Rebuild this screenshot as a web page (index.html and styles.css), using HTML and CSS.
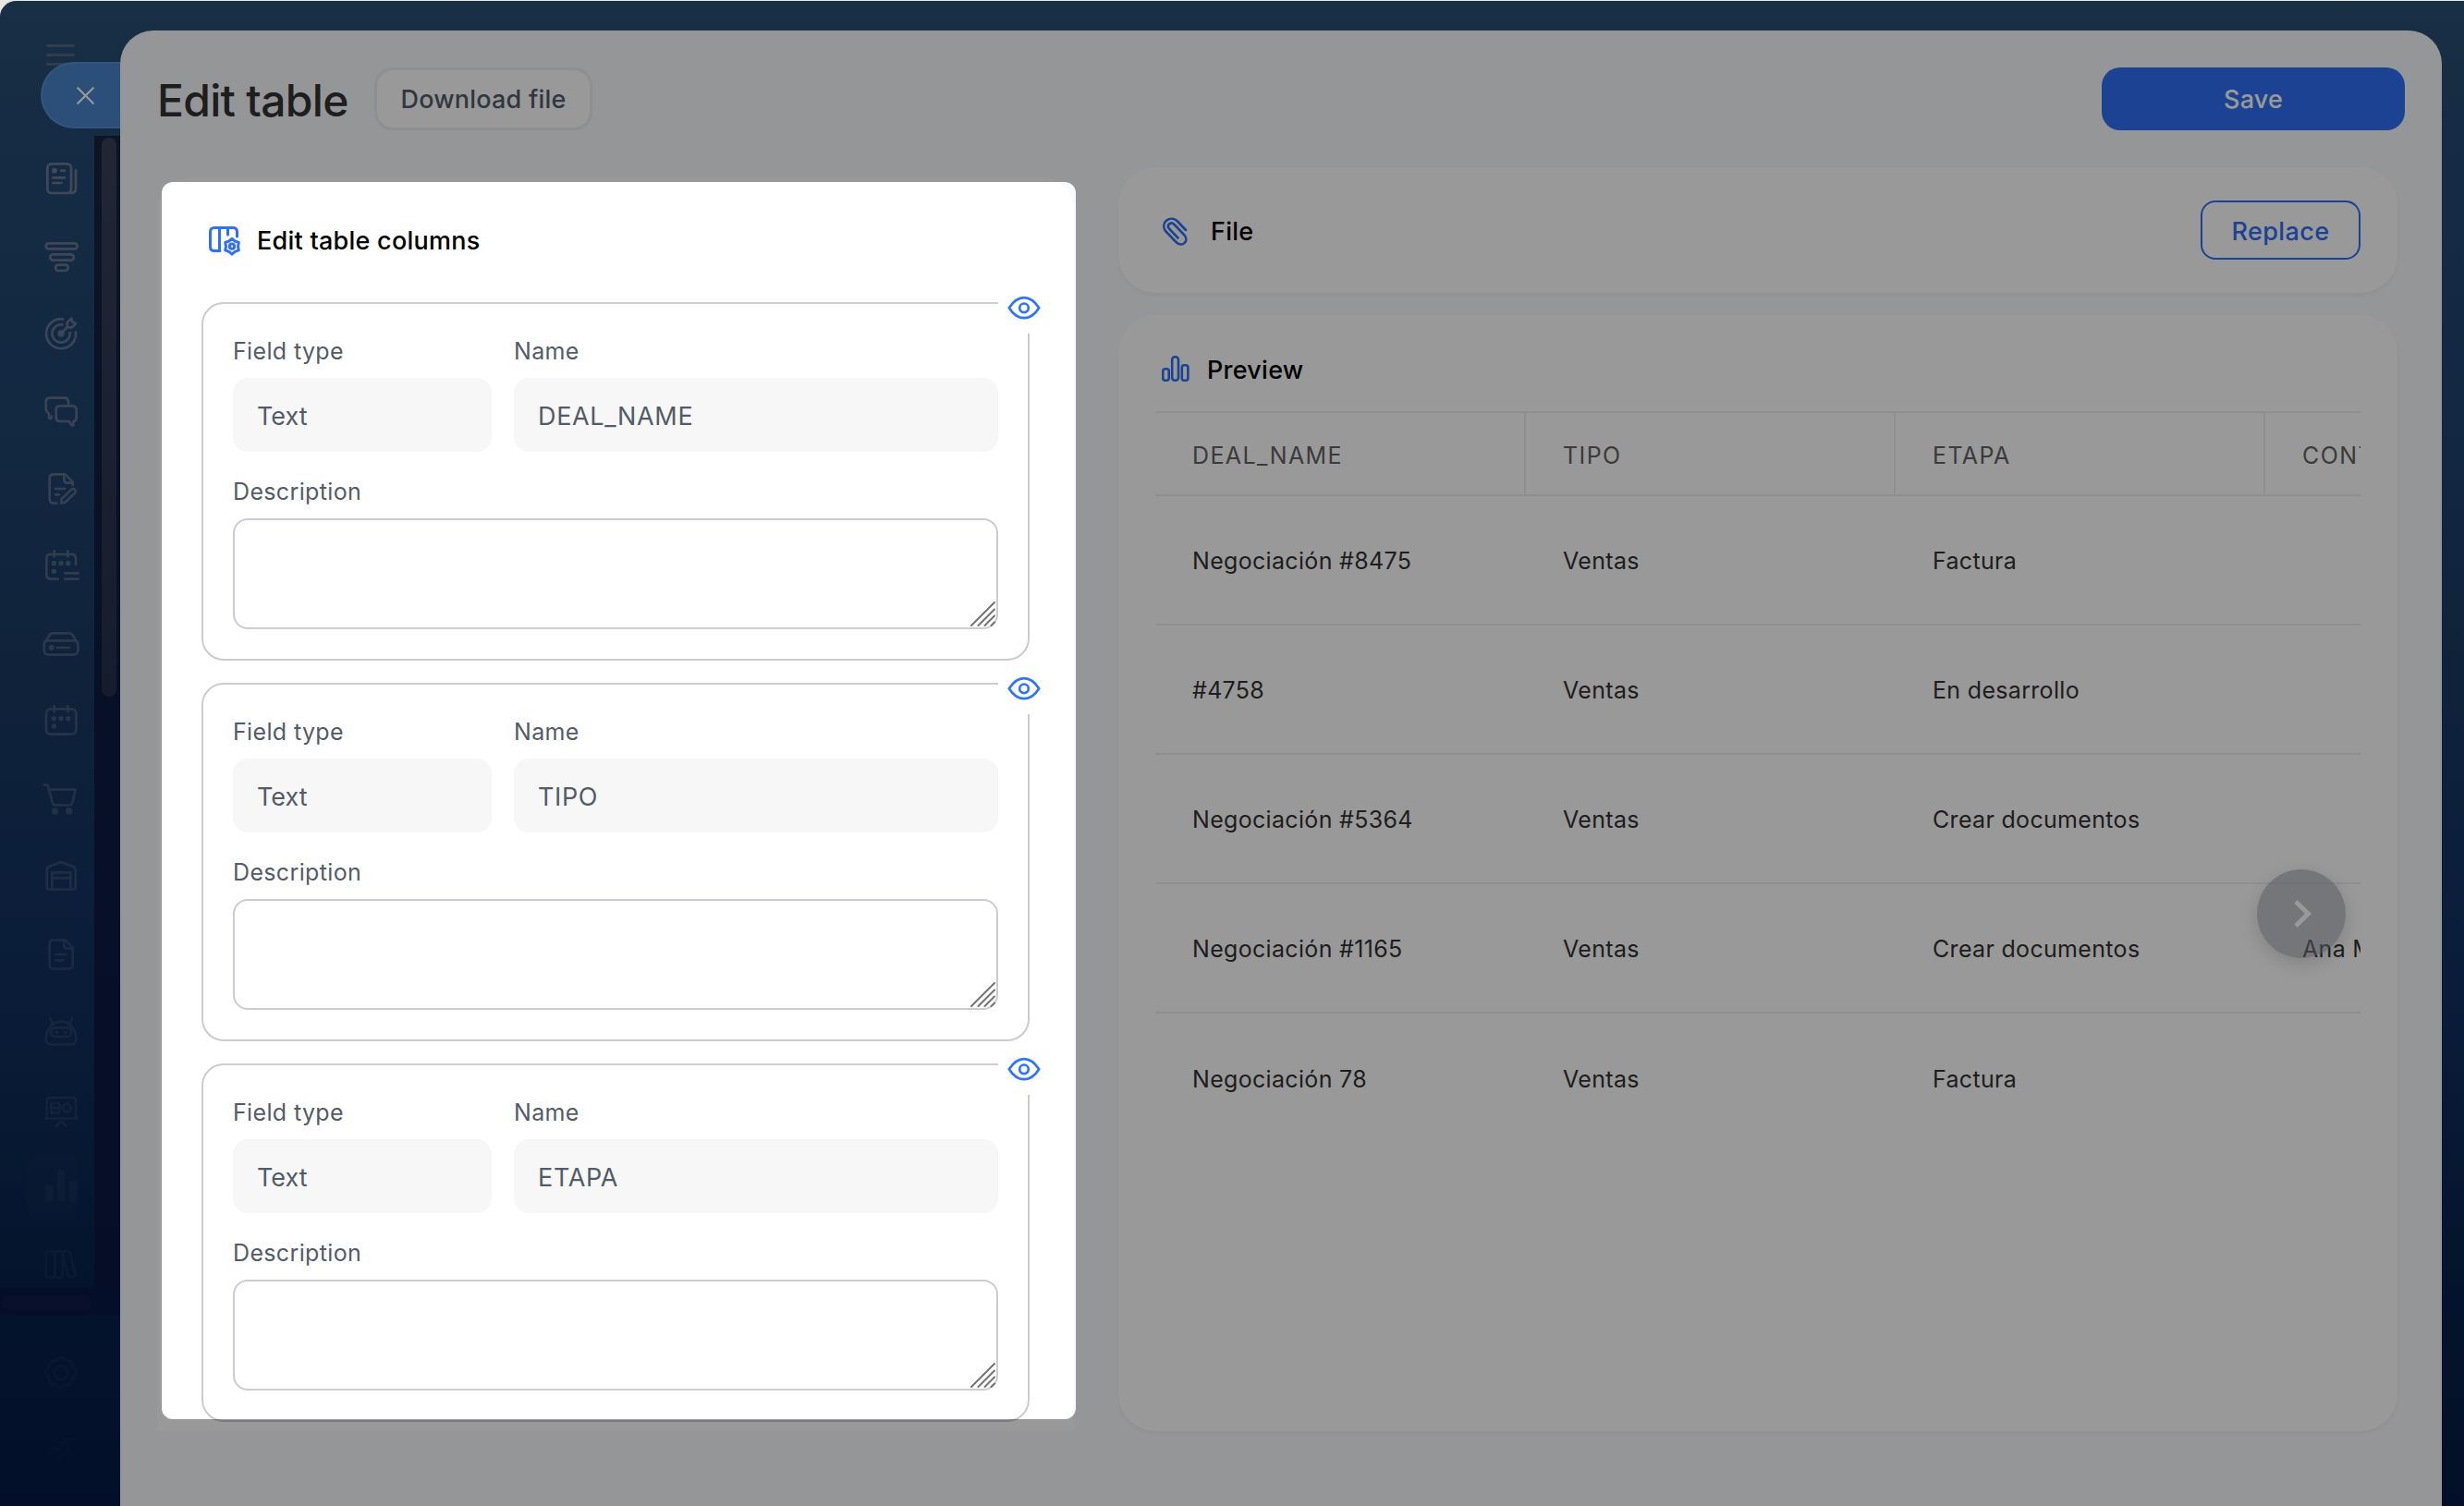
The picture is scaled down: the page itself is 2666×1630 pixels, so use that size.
FILE: index.html
```html
<!DOCTYPE html>
<html lang="en">
<head>
	<meta charset="UTF-8">
	<meta name="viewport" content="width=device-width, initial-scale=1.0">
	<title>Edit table</title>
	<link rel="stylesheet" href="styles.css">
</head>
<body>
	<!-- shared icons -->
	<svg class="defs" width="0" height="0">
		<symbol id="eye" viewBox="0 0 56 56">
			<path d="M11.8 28.3 C14 25 19 17.2 28 17.2 S42 25 44.2 28.3 C42 31.8 37 39.2 28 39.2 S14 31.8 11.8 28.3Z"/>
			<circle cx="28" cy="28.3" r="4.8"/>
		</symbol>
		<symbol id="grip" viewBox="0 0 28 28">
			<path d="M1 27 L26 2 M8.500 27 L26 9.500 M15.500 27 L26 16.500 M22.500 27 L26 23.500"/>
		</symbol>
	</svg>

	<div class="app">
		<aside class="sidebar">
			<div class="burger"><span></span><span></span><span></span></div>
			<div class="nav-scroll">
				<nav class="nav">
					<a class="nav-item"><svg viewBox="0 0 120 120"><rect x="16" y="13" width="77" height="95" rx="13"/><path d="M108 34 V94 Q108 108 93 108"/><path d="M60 35 H72 M34 58 H72 M34 75 H62"/><circle class="fill" cx="39" cy="35" r="9"/></svg></a>
					<a class="nav-item"><svg viewBox="0 0 120 120"><rect x="11" y="19" width="102" height="18" rx="9"/><rect x="25" y="55" width="76" height="19" rx="9"/><rect x="42" y="89" width="41" height="19" rx="9"/></svg></a>
					<a class="nav-item"><svg viewBox="0 0 120 120"><path d="M66 13 A48 48 0 1 0 108 56"/><path d="M64 31 A29 29 0 1 0 89 57 M60 60 L82 38"/><path d="M80 40 V24 L94 11 L97 23 L108 27 L96 40Z"/><circle class="fill" cx="60" cy="60" r="11"/></svg></a>
					<a class="nav-item"><svg viewBox="0 0 120 120"><path d="M84 36 V30 Q84 17 71 17 H24 Q11 17 11 30 V52 Q11 62 21 68 V82 Q29 88 30 77"/><path d="M57 43 H97 Q110 43 110 56 V80 Q110 91 100 94 V106 Q96 110 86 93 H57 Q44 93 44 80 V56 Q44 43 57 43Z"/></svg></a>
					<a class="nav-item"><svg viewBox="0 0 120 120"><path d="M46 107 H36 Q23 107 23 94 V26 Q23 13 36 13 H74 L98 38 V48"/><path d="M70 13 V30 Q70 41 80 41 H96 M42 60 H72 M42 79 H54"/><path d="M61 107 V94 L93 63 Q100 57 105 63 Q111 69 104 75 L73 104Z"/></svg></a>
					<a class="nav-item"><svg viewBox="0 0 120 120"><path d="M50 101 H26 Q13 101 13 88 V34 Q13 21 26 21 H94 Q108 21 108 34 V54 M38 10 V28 M82 10 V28 M73 82 H116 M73 101 H116"/><g class="fill"><circle cx="37" cy="50" r="8"/><circle cx="60" cy="50" r="8"/><circle cx="83" cy="50" r="8"/><circle cx="37" cy="76" r="8"/></g></svg></a>
					<a class="nav-item"><svg viewBox="0 0 120 120"><rect x="5" y="49" width="110" height="46" rx="14"/><path d="M8 54 L24 30 Q27 25 33 25 H87 Q93 25 97 30 L112 54 M48 72 H87"/><circle class="fill" cx="29" cy="72" r="9"/></svg></a>
					<a class="nav-item"><svg viewBox="0 0 120 120"><rect x="12" y="19" width="97" height="82" rx="14"/><path d="M38 10 V28 M82 10 V28"/><g class="fill"><circle cx="37" cy="50" r="8"/><circle cx="60" cy="50" r="8"/><circle cx="83" cy="50" r="8"/><circle cx="37" cy="75" r="8"/></g></svg></a>
					<a class="nav-item"><svg viewBox="0 0 120 120"><path d="M6 14 H17 L32 71 Q34 79 42 79 H88 Q95 79 97 72 L107 29 H22"/><g class="fill"><circle cx="40" cy="99" r="11"/><circle cx="86" cy="99" r="11"/></g></svg></a>
					<a class="nav-item"><svg viewBox="0 0 120 120"><path d="M14 93 V38 Q14 30 21 27 L54 14 Q60 11 66 14 L99 27 Q107 30 107 38 V93 Q107 101 99 101 H22 Q14 101 14 93Z"/><path d="M31 101 V46 H91 V101 M31 64 H91"/></svg></a>
					<a class="nav-item"><svg viewBox="0 0 120 120"><path d="M36 13 H74 L98 38 V94 Q98 107 85 107 H36 Q23 107 23 94 V26 Q23 13 36 13Z"/><path d="M70 13 V30 Q70 41 80 41 H96 M42 60 H76 M42 79 H68"/></svg></a>
					<a class="nav-item"><svg viewBox="0 0 120 120"><path d="M60 26 C30 26 11 54 11 85 Q11 100 28 100 H92 Q109 100 109 85 C109 54 90 26 60 26Z M24 15 L33 32 M97 15 L88 32"/><rect x="27" y="46" width="66" height="29" rx="14"/><g class="fill"><circle cx="46" cy="61" r="5"/><circle cx="74" cy="61" r="5"/></g></svg></a>
					<a class="nav-item"><svg viewBox="0 0 120 120"><path d="M14 89 V31 Q14 21 24 21 H98 Q108 21 108 31 V89 M8 89 H112 M44 113 L60 98 L76 113"/><rect x="28" y="39" width="27" height="32" rx="4"/><path d="M28 55 H55"/><circle cx="79" cy="54" r="13"/></svg></a>
					<a class="nav-item active"><svg viewBox="0 0 120 120"><g class="fill"><rect x="9" y="53" width="26" height="52" rx="8"/><rect x="48" y="5" width="25" height="100" rx="8"/><rect x="86" y="40" width="25" height="65" rx="8"/></g></svg></a>
					<a class="nav-item"><svg viewBox="0 0 120 120"><rect x="11" y="16" width="29" height="85" rx="9"/><rect x="40" y="16" width="26" height="85" rx="9"/><path d="M69 22 Q68 15 75 15 H82 Q87 15 89 20 L106 88 Q107 96 100 98 L92 100 Q86 101 84 95 L66 38"/></svg></a>
				</nav>
				<div class="track"><span class="thumb"></span></div>
			</div>
			<div class="track-x"><span class="thumb-x"></span></div>
			<div class="nav-bottom">
				<a class="nav-item"><svg viewBox="0 0 120 120"><circle cx="60" cy="62" r="22"/><path d="M50 20 Q60 4 70 20 L80 24 Q97 20 98 38 L102 50 Q120 62 102 74 L98 84 Q97 102 80 100 L70 104 Q60 120 50 104 L40 100 Q23 104 22 86 L18 74 Q0 62 18 50 L22 40 Q23 22 40 24Z"/></svg></a>
				<a class="nav-item rocket"><svg viewBox="0 0 120 120"><path d="M96 24 Q66 24 50 56 L66 72 Q96 54 96 24Z M50 56 H36 L28 68 L42 70 M66 72 V86 L54 94 L52 80"/><circle cx="76" cy="44" r="6"/></svg></a>
			</div>
			<button class="close-tab"><svg viewBox="0 0 24 24"><path d="M2.500 2.500 L21.500 21.500 M21.500 2.500 L2.500 21.500"/></svg></button>
		</aside>

		<main class="panel">
			<header class="panel-header">
				<h1>Edit table</h1>
				<button class="btn btn-light">Download file</button>
				<button class="btn btn-primary">Save</button>
			</header>

			<div class="content">
				<section class="columns">
					<h2 class="section-title">
						<svg class="icon-columns" viewBox="0 0 48 48"><path d="M20 35.500 H14 Q9.500 35.500 9.500 31 V15 Q9.500 10.500 14 10.500 H34 Q38.500 10.500 38.500 15 V20 M19.500 10.500 V35.500 M28.500 10.500 V18"/><path d="M33 22.300 L36.200 25 L40.300 26.500 L39.500 30.700 L40.300 34.900 L36.200 36.400 L33 39.100 L29.800 36.400 L25.700 34.900 L26.500 30.700 L25.700 26.500 L29.800 25Z"/><circle cx="33" cy="30.700" r="2.600"/></svg>
						Edit table columns
					</h2>

					<div class="field-card">
						<button class="toggle"><svg><use href="#eye"/></svg></button>
						<div class="field-row">
							<div class="field"><label>Field type</label><div class="input">Text</div></div>
							<div class="field"><label>Name</label><div class="input input-name">DEAL_NAME</div></div>
						</div>
						<div class="field">
							<label>Description</label>
							<div class="area"><textarea></textarea><svg class="grip"><use href="#grip"/></svg></div>
						</div>
					</div>

					<div class="field-card">
						<button class="toggle"><svg><use href="#eye"/></svg></button>
						<div class="field-row">
							<div class="field"><label>Field type</label><div class="input">Text</div></div>
							<div class="field"><label>Name</label><div class="input input-name">TIPO</div></div>
						</div>
						<div class="field">
							<label>Description</label>
							<div class="area"><textarea></textarea><svg class="grip"><use href="#grip"/></svg></div>
						</div>
					</div>

					<div class="field-card">
						<button class="toggle"><svg><use href="#eye"/></svg></button>
						<div class="field-row">
							<div class="field"><label>Field type</label><div class="input">Text</div></div>
							<div class="field"><label>Name</label><div class="input input-name">ETAPA</div></div>
						</div>
						<div class="field">
							<label>Description</label>
							<div class="area"><textarea></textarea><svg class="grip"><use href="#grip"/></svg></div>
						</div>
					</div>
				</section>

				<div class="side">
					<section class="card file-card">
						<h2 class="section-title file-title">
							<svg viewBox="0 0 40 40"><path d="M33 19 L24 9.500 C16 2 5 11 11 20 L22.500 32 C29 38.500 37 31 31.500 24.500 L20.500 13 C16.500 9 11.500 14 15.500 18 L24.500 27.500"/></svg>
							File
						</h2>
						<button class="btn btn-outline">Replace</button>
					</section>

					<section class="card preview-card">
						<h2 class="section-title preview-title">
							<svg viewBox="0 0 40 40"><rect x="8.300" y="19.300" width="6.400" height="12.500" rx="2.500"/><rect x="18.200" y="6.300" width="6.800" height="25.500" rx="3"/><rect x="28.800" y="15.300" width="6.600" height="16.500" rx="2.500"/></svg>
							Preview
						</h2>
						<div class="table-wrap">
							<table>
								<colgroup><col class="first"><col><col><col></colgroup>
								<thead>
									<tr><th>DEAL_NAME</th><th>TIPO</th><th>ETAPA</th><th>CONTACTO</th></tr>
								</thead>
								<tbody>
									<tr><td>Negociación #8475</td><td>Ventas</td><td>Factura</td><td></td></tr>
									<tr><td>#4758</td><td>Ventas</td><td>En desarrollo</td><td></td></tr>
									<tr><td>Negociación #5364</td><td>Ventas</td><td>Crear documentos</td><td></td></tr>
									<tr><td>Negociación #1165</td><td>Ventas</td><td>Crear documentos</td><td>Ana M</td></tr>
									<tr><td>Negociación 78</td><td>Ventas</td><td>Factura</td><td></td></tr>
								</tbody>
							</table>
						</div>
						<button class="next"><svg viewBox="0 0 96 96"><path d="M42 35 L55.500 48 L42 61"/></svg></button>
					</section>
				</div>
			</div>
		</main>

		<!-- dims everything but the columns form -->
		<div class="spotlight"></div>
	</div>
</body>
</html>
```
FILE: styles.css
```css
* {
	box-sizing: border-box;
}

body {
	margin: 0;
	height: 1630px;
	overflow: hidden;
	background: #e8e6e2;
	font-family: Inter, "Liberation Sans", sans-serif;
	font-size: 25px;
	color: #333;
}

h1, h2 {
	margin: 0;
	font-weight: 500;
}

button {
	font-family: inherit;
	padding: 0;
	border: none;
	background: none;
}

svg {
	display: block;
	fill: none;
	stroke-linecap: round;
	stroke-linejoin: round;
}

.defs {
	position: absolute;
}

.app {
	position: relative;
	display: flex;
	height: 1630px;
	border-top: 1px solid #e8e6e2;
	border-top-left-radius: 18px;
	overflow: hidden;
	background: linear-gradient(180deg, #2a4f72 0, #254a72 120px, #1f426c 480px, #1a3a62 720px, #133260 1000px, #0e2b56 1200px, #08214b 1400px, #061a46 1630px);
}

/* sidebar */
.sidebar {
	position: relative;
	width: 130px;
	flex: none;
}

.burger {
	height: 146px;
	padding: 47px 0 0 50px;
}

.burger span {
	display: block;
	width: 31px;
	height: 3px;
	margin-bottom: 7px;
	border-radius: 2px;
	background: #52677f;
}

.nav-scroll {
	display: flex;
	height: 1247px;
	overflow: hidden;
}

.nav {
	width: 102px;
	padding-top: 4px;
	-webkit-mask-image: linear-gradient(180deg, #000 0, rgba(0,0,0,.82) 25%, rgba(0,0,0,.48) 50%, rgba(0,0,0,.25) 75%, rgba(0,0,0,.1) 100%);
	mask-image: linear-gradient(180deg, #000 0, rgba(0,0,0,.82) 25%, rgba(0,0,0,.48) 50%, rgba(0,0,0,.25) 75%, rgba(0,0,0,.1) 100%);
}

.nav-item {
	display: flex;
	align-items: center;
	height: 84px;
	padding-left: 46px;
}

.nav-item svg {
	width: 40px;
	height: 40px;
	stroke: #6e7b94;
	stroke-width: 8;
}

.nav-item .fill {
	fill: #6e7b94;
	stroke: none;
}

.nav-item.active {
	width: 58px;
	height: 76px;
	margin: 4px 0 4px 28px;
	padding-left: 18px;
	border-radius: 20px;
	background: rgba(110, 123, 148, .2);
}

.nav-item.active svg {
	opacity: .8;
}

.track {
	width: 28px;
	padding: 2px 4px 0 8px;
	background: linear-gradient(180deg, #16243f, #0c1c40 50%, #0a1842);
}

.thumb {
	display: block;
	height: 605px;
	border-radius: 8px;
	background: linear-gradient(180deg, #383f58, #25304c);
}

.track-x {
	height: 30px;
	padding: 8px 0 0 2px;
	background: #091843;
}

.thumb-x {
	display: block;
	width: 96px;
	height: 16px;
	border-radius: 8px;
	background: #0f1c48;
}

.nav-bottom {
	padding-top: 19px;
	opacity: .09;
}

.nav-bottom .rocket {
	opacity: .4;
}

.close-tab {
	position: absolute;
	left: 44px;
	top: 66px;
	width: 86px;
	height: 72px;
	padding-left: 36px;
	border: 2px solid #5590d0;
	border-right: none;
	border-radius: 36px 0 0 36px;
	background: #4a84ca;
}

.close-tab svg {
	width: 21px;
	height: 21px;
	stroke: #fff;
	stroke-width: 2.4;
}

/* panel */
.panel {
	flex: 1;
	margin: 32px 24px 0 0;
	border-radius: 36px 36px 0 0;
	background: #f8fafd;
}

.panel-header {
	display: flex;
	align-items: center;
	padding: 40px 40px 0;
}

.panel-header h1 {
	width: 235px;
	padding-top: 3px;
	font-size: 48px;
	line-height: 60px;
	letter-spacing: -.7px;
	white-space: nowrap;
}

.btn {
	height: 68px;
	border-radius: 20px;
	font-size: 27px;
	font-weight: 500;
	letter-spacing: .2px;
}

.btn-light {
	width: 236px;
	border: 3px solid #eceef0;
	background: #fff;
	color: #525c69;
}

.btn-primary {
	width: 328px;
	margin-left: auto;
	background: #2f70f5;
	color: #fff;
}

.content {
	display: grid;
	grid-template-columns: 992px 1384px;
	gap: 48px;
	padding: 40px 0 0 40px;
}

.section-title {
	display: flex;
	align-items: center;
	font-size: 27px;
	letter-spacing: .25px;
	color: #000;
}

.section-title svg {
	width: 40px;
	height: 40px;
	stroke: #2f70f5;
	stroke-width: 2.6;
}

/* left column: form */
.columns {
	height: 1357px;
	margin-top: 11px;
	padding: 40px 48px 0;
	border-radius: 36px 36px 0 0;
	background: #fff;
}

.columns .section-title {
	gap: 12px;
	height: 56px;
	margin-bottom: 39px;
}

.section-title .icon-columns {
	width: 48px;
	height: 48px;
	stroke-width: 3;
}

.field-card {
	position: relative;
	height: 388px;
	margin-bottom: 24px;
	padding: 32px;
	border: 2px solid #c9ccd1;
	border-radius: 24px;
}

.toggle {
	position: absolute;
	top: -24px;
	right: -24px;
	width: 56px;
	height: 56px;
	background: #fff;
}

.toggle svg {
	width: 56px;
	height: 56px;
	stroke: #2f75fb;
	stroke-width: 2.7;
}

.field-row {
	display: grid;
	grid-template-columns: 280px 1fr;
	gap: 24px;
	margin-bottom: 24px;
}

.field label {
	display: block;
	margin-bottom: 10px;
	line-height: 38px;
	letter-spacing: .35px;
	color: #525c69;
}

.input {
	height: 80px;
	padding-left: 26px;
	border-radius: 16px;
	background: #f7f7f7;
	font-size: 27px;
	line-height: 83px;
	color: #525c69;
}

.input-name {
	letter-spacing: .65px;
}

.area {
	position: relative;
	height: 120px;
}

.area textarea {
	display: block;
	width: 100%;
	height: 100%;
	border: 2px solid #c9ccd1;
	border-radius: 16px;
	background: #fff;
	resize: none;
}

.grip {
	position: absolute;
	right: 2px;
	bottom: 3px;
	width: 28px;
	height: 28px;
	stroke: #747474;
	stroke-width: 2;
}

/* right column */
.card {
	border-radius: 40px;
	background: #fff;
	box-shadow: 0 2px 4px rgba(0, 0, 0, .05);
}

.file-card {
	display: flex;
	align-items: center;
	justify-content: space-between;
	height: 136px;
	margin-bottom: 24px;
	padding: 0 40px;
}

.file-title {
	gap: 20px;
	padding-top: 2px;
}

.btn-outline {
	width: 173px;
	height: 64px;
	padding-top: 2px;
	border: 2px solid #2f70f5;
	border-radius: 16px;
	color: #2f70f5;
	letter-spacing: .4px;
}

.preview-card {
	position: relative;
	height: 1208px;
	padding: 36px 40px 0;
}

.preview-title {
	gap: 16px;
	height: 46px;
	margin-bottom: 22px;
}

.table-wrap {
	overflow: hidden;
}

table {
	width: 1601px;
	table-layout: fixed;
	border-collapse: separate;
	border-spacing: 0;
}

col {
	width: 400px;
}

col.first {
	width: 401px;
}

th {
	height: 92px;
	padding: 3px 0 0 40px;
	border: solid #eeeff0;
	border-width: 2px 2px 2px 0;
	font-weight: 400;
	letter-spacing: 1.4px;
	text-align: left;
	color: #636363;
}

td {
	height: 140px;
	padding: 2px 0 0 40px;
	border-bottom: 2px solid #eeeff0;
	letter-spacing: .32px;
}

tr:last-child td {
	border-bottom: none;
}

.next {
	position: absolute;
	top: 600px;
	right: 56px;
	width: 96px;
	height: 96px;
	border-radius: 50%;
	background: rgba(142, 146, 157, .53);
	box-shadow: 0 6px 20px rgba(0, 0, 0, .15);
}

.next svg {
	width: 96px;
	height: 96px;
	stroke: #fff;
	stroke-width: 5;
	stroke-linecap: butt;
	stroke-linejoin: miter;
}

.spotlight {
	position: absolute;
	left: 175px;
	top: 196px;
	width: 989px;
	height: 1339px;
	border-radius: 12px;
	box-shadow: 0 0 0 3000px rgba(0, 0, 0, .4);
}
```
